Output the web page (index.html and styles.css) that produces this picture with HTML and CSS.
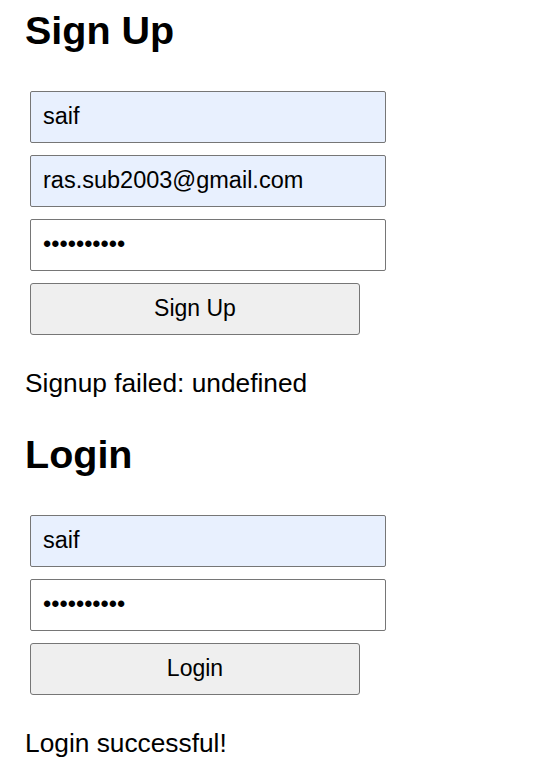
FILE: index.html
```html
<!DOCTYPE html>
<html lang="en">
<head>
<meta charset="utf-8">
<title>Auth</title>
<link rel="stylesheet" href="styles.css">
</head>
<body>
<div class="page">
  <h2 class="title">Sign Up</h2>
  <form class="form">
    <input class="field autofill" type="text" value="saif">
    <input class="field autofill" type="email" value="ras.sub2003@gmail.com">
    <input class="field" type="password" value="abcdefghij">
    <button class="btn" type="button">Sign Up</button>
  </form>
  <p class="msg">Signup failed: undefined</p>

  <h2 class="title title-second">Login</h2>
  <form class="form">
    <input class="field autofill" type="text" value="saif">
    <input class="field" type="password" value="abcdefghij">
    <button class="btn" type="button">Login</button>
  </form>
  <p class="msg">Login successful!</p>
</div>
</body>
</html>
```

FILE: styles.css
```css
html, body {
  margin: 0;
  padding: 0;
  background: #ffffff;
}

body {
  font-family: "Liberation Sans", Arial, sans-serif;
  color: #000000;
}

.page {
  padding: 8px 25px 0 25px;
}

.title {
  margin: 0;
  font-size: 39.5px;
  font-weight: bold;
  line-height: normal;
}

.title-second {
  margin-top: 33.5px;
}

.form {
  display: flex;
  flex-direction: column;
  align-items: flex-start;
  gap: 12px;
  margin: 37.5px 0 0 5px;
}

.field {
  box-sizing: border-box;
  width: 356px;
  height: 52px;
  margin: 0;
  padding: 0 12px;
  border: 1px solid #767676;
  border-radius: 2px;
  background: #ffffff;
  font-family: "Liberation Sans", Arial, sans-serif;
  font-size: 23.5px;
  color: #000000;
  outline: none;
}

.field.autofill {
  background: #e8f0fe;
}

.btn {
  box-sizing: border-box;
  width: 330px;
  height: 52px;
  margin: 0;
  padding: 0;
  border: 1px solid #767676;
  border-radius: 3px;
  background: #efefef;
  font-family: "Liberation Sans", Arial, sans-serif;
  font-size: 23px;
  color: #000000;
}

.msg {
  margin: 33px 0 0 0;
  font-size: 26.3px;
  line-height: normal;
}
```
